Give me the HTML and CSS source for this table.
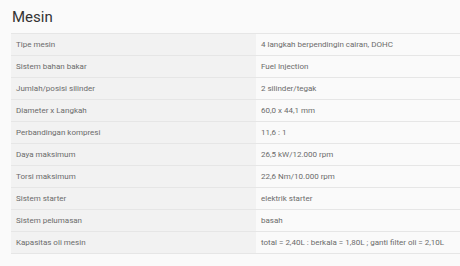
FILE: index.html
```html
<!DOCTYPE html>
<html>
<head>
<meta charset="utf-8">
<link rel="stylesheet" href="styles.css">
</head>
<body>
<div class="spec">
  <h2 class="spec-title">Mesin</h2>
  <table class="spec-table">
    <tr><td class="k">Tipe mesin</td><td class="v">4 langkah berpendingin cairan, DOHC</td></tr>
    <tr><td class="k">Sistem bahan bakar</td><td class="v">Fuel Injection</td></tr>
    <tr><td class="k">Jumlah/posisi silinder</td><td class="v">2 silinder/tegak</td></tr>
    <tr><td class="k">Diameter x Langkah</td><td class="v">60,0 x 44,1 mm</td></tr>
    <tr><td class="k">Perbandingan kompresi</td><td class="v">11,6 : 1</td></tr>
    <tr><td class="k">Daya maksimum</td><td class="v">26,5 kW/12.000 rpm</td></tr>
    <tr><td class="k">Torsi maksimum</td><td class="v">22,6 Nm/10.000 rpm</td></tr>
    <tr><td class="k">Sistem starter</td><td class="v">elektrik starter</td></tr>
    <tr><td class="k">Sistem pelumasan</td><td class="v">basah</td></tr>
    <tr><td class="k">Kapasitas oli mesin</td><td class="v">total = 2,40L : berkala = 1,80L ; ganti filter oli = 2,10L</td></tr>
  </table>
</div>
</body>
</html>
```
FILE: styles.css
```css
html, body {
  margin: 0;
  padding: 0;
  background: #fafafa;
  font-family: Roboto, "Liberation Sans", sans-serif;
}
.spec {
  padding: 8px 0 0 11px;
}
.spec-title {
  margin: 0 0 7px 1px;
  font-size: 15px;
  font-weight: 400;
  color: #333;
  line-height: 18px;
}
.spec-table {
  width: 460px;
  border-collapse: collapse;
  font-size: 8px;
  color: #6b6b6b;
}
.spec-table td {
  height: 21px;
  padding: 0 5px;
  border-top: 1px solid #e6e6e6;
  border-bottom: 1px solid #e6e6e6;
  vertical-align: middle;
  line-height: 10px;
}
.spec-table .k {
  width: 235px;
  background: #f2f2f2;
}
.spec-table .v {
  background: #fafafa;
}
```
